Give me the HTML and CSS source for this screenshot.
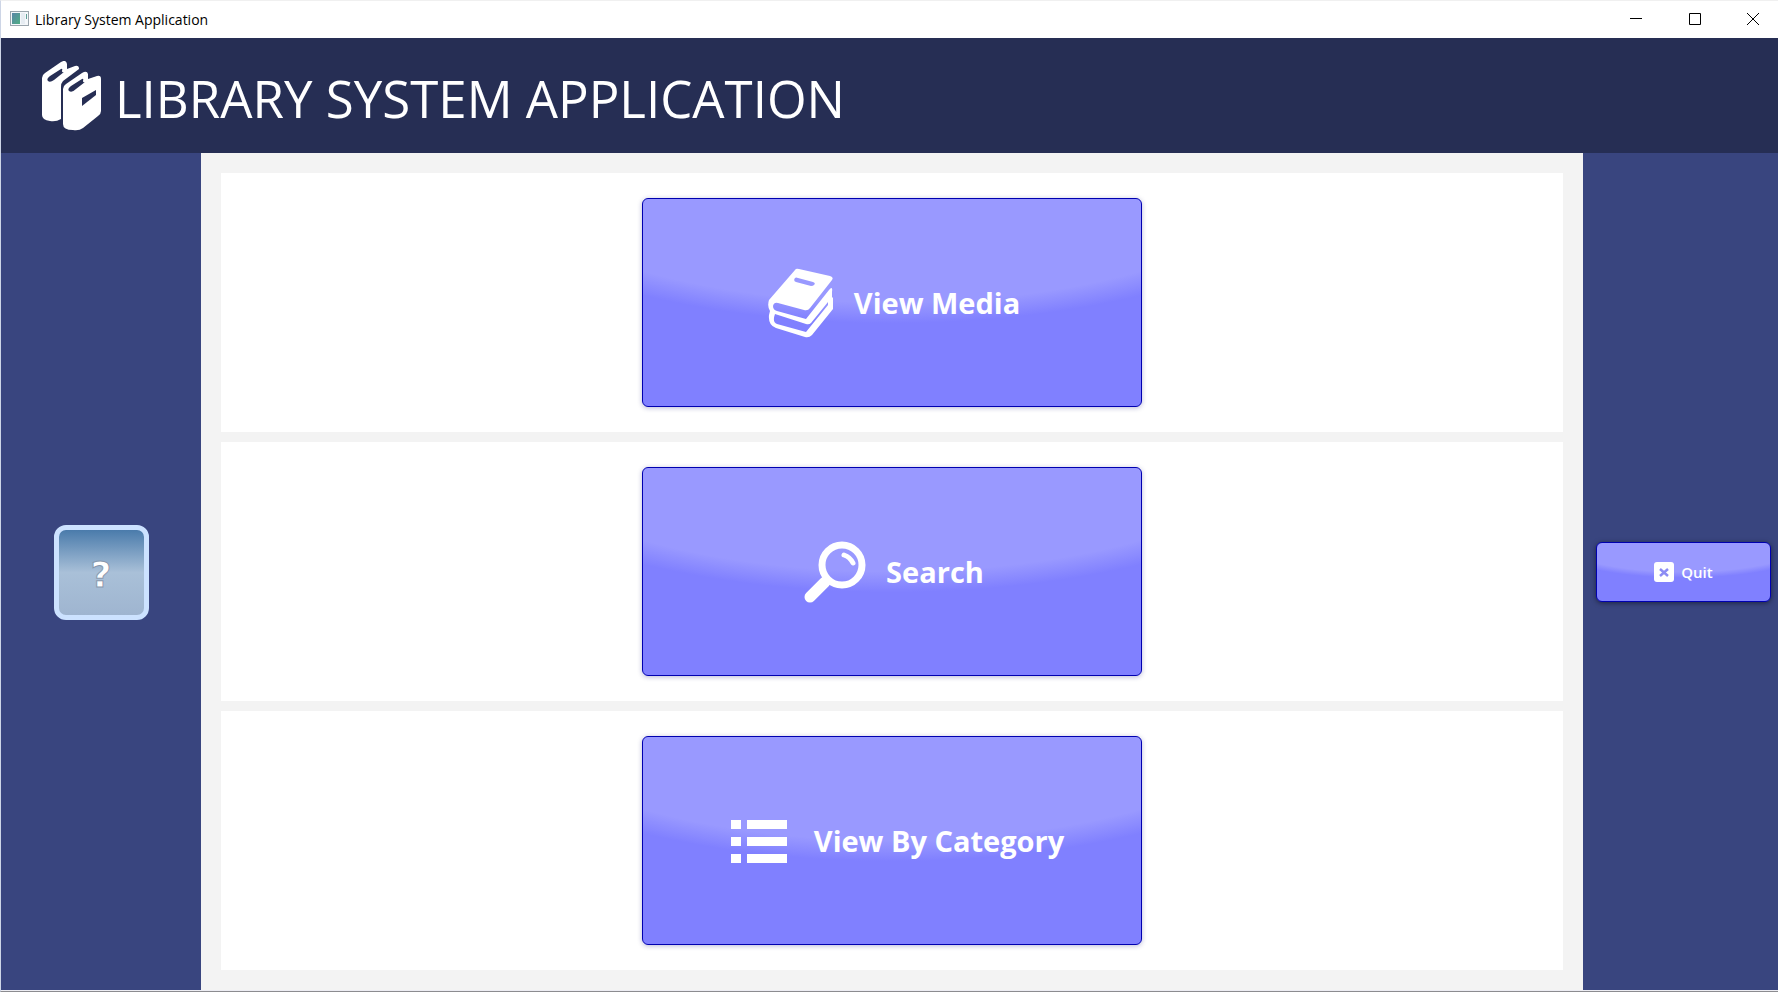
FILE: index.html
```html
<!DOCTYPE html>
<html lang="en">
<head>
<meta charset="utf-8">
<title>Library System Application</title>
<link rel="stylesheet" href="styles.css">
</head>
<body>
<div class="window">
  <div class="titlebar">
    <svg class="app-icon" viewBox="0 0 19 15" aria-hidden="true">
      <defs><linearGradient id="pane" x1="0" y1="0" x2="1" y2="1"><stop offset="0" stop-color="#5a86a8"/><stop offset="1" stop-color="#4fae84"/></linearGradient></defs>
      <rect x=".5" y=".5" width="18" height="14" fill="#f4f7fa" stroke="#9aa5ad"/>
      <rect x="2" y="2" width="8" height="11" fill="url(#pane)"/>
      <rect x="11" y="2" width="4" height="11" fill="#e6ecf2"/>
      <rect x="16" y="3" width="1" height="5" fill="#5f9f96"/>
    </svg>
    <span class="titlebar-text">Library System Application</span>
    <div class="window-controls">
      <button class="window-button" aria-label="Minimize"><svg viewBox="0 0 12 12"><path d="M0 5.5H12"/></svg></button>
      <button class="window-button" aria-label="Maximize"><svg viewBox="0 0 12 12"><path d="M.5.5H11.500V11.500H.5Z"/></svg></button>
      <button class="window-button" aria-label="Close"><svg viewBox="0 0 12 12"><path d="M0 0L12 12M12 0L0 12"/></svg></button>
    </div>
  </div>

  <header class="banner">
    <svg class="logo" viewBox="0 0 60 70" aria-hidden="true">
      <path fill="#fff" d="M0 17Q0 14 3 12L19 1Q24-2 25 3V8L33 5Q37 4 37 8L21 20Q19 22 19 26V58Q14 61 8 60Q0 59 0 54Z"/>
      <path fill="#262e54" d="M19 8Q21 7 20 10Q20 12 22 11L12 19Q8 22 6 20Q4 18 8 15Z"/>
      <path fill="#fff" d="M21 28Q21 25 24 23L40 12Q45 9 46 13V18L55 15Q59 14 59 18V50Q59 53 56 55L41 67Q37 70 31 69Q21 69 21 63Z"/>
      <path fill="#262e54" d="M40 18Q42 17 41 20Q41 22 43 21L34 28Q30 32 27 30Q25 28 29 25Z"/>
      <path fill="#262e54" d="M40 37L54 29V34L40 45Z"/>
    </svg>
    <h1 class="banner-title">LIBRARY SYSTEM APPLICATION</h1>
  </header>

  <div class="content">
    <aside class="side side-left">
      <button class="help-button" aria-label="Help">?</button>
    </aside>

    <main class="menu">
      <section class="panel">
        <button class="glossy menu-button">
          <svg class="icon-books" viewBox="0 0 66 70" aria-hidden="true">
            <path fill="#fff" fill-rule="evenodd" d="M27 2Q28 0 31 1L62 8Q66 9 64 12L42 40Q40 43 36 42L10 35Q6 34 5 38Q5 42 9 43L38 51L61 22Q65 17 64 24V29L65 30V41L44 67Q41 70 37 69L8 60Q0 57 1 47L2 43Q-1 38 1 32ZM27 10Q25 13 28 14L43 18Q45 18 46 17Q48 15 45 14L30 10Q28 9 27 10ZM7 46Q4 54 9 56L38 64L60 37V34L43 55Q41 57 38 56Z"/>
          </svg>
          <span>View Media</span>
        </button>
      </section>
      <section class="panel">
        <button class="glossy menu-button">
          <svg class="icon-search" viewBox="0 0 62 62" aria-hidden="true" fill="none" stroke="#fff" stroke-linecap="round">
            <circle cx="38" cy="24" r="20" stroke-width="7"/>
            <path stroke-width="11" d="M6 56L21 41"/>
            <path stroke-width="5" d="M40 14Q46 16 49 22"/>
          </svg>
          <span>Search</span>
        </button>
      </section>
      <section class="panel">
        <button class="glossy menu-button">
          <svg class="icon-list" viewBox="0 0 70 70" aria-hidden="true" fill="#fff">
            <path d="M7 14H17V23H7ZM23 14H63V23H23ZM7 31H17V40H7ZM23 31H63V40H23ZM7 48H17V57H7ZM23 48H63V57H23Z"/>
          </svg>
          <span>View By Category</span>
        </button>
      </section>
    </main>

    <aside class="side side-right">
      <button class="glossy quit-button">
        <svg class="icon-quit" viewBox="0 0 20 20" aria-hidden="true">
          <rect width="20" height="20" rx="3" fill="#fff"/>
          <path d="M6 7L14 14M14 7L6 14" stroke="#8c8cf4" stroke-width="2.500"/>
        </svg>
        <span>Quit</span>
      </button>
    </aside>
  </div>
</div>
</body>
</html>
```
FILE: styles.css
```css
* {
  box-sizing: border-box;
}

body {
  margin: 0;
  background: #fff;
  font-family: "Open Sans", "Noto Sans", sans-serif;
}

button {
  margin: 0;
  padding: 0;
  border: 0;
  font-family: inherit;
  cursor: pointer;
}

.window {
  display: flex;
  flex-direction: column;
  height: 100vh;
  border-top: 1px solid #f0f0f0;
  border-left: 1px solid #cdd5e6;
  border-bottom: 1px solid #8c8c90;
}

.titlebar {
  display: flex;
  align-items: center;
  flex: none;
  height: 37px;
  padding: 0 0 2px 9px;
  background: #fff;
}

.app-icon {
  width: 19px;
  height: 15px;
}

.titlebar-text {
  padding: 2px 0 0 6px;
  color: #000;
  font-size: 14px;
  line-height: 20px;
}

.window-controls {
  display: flex;
  align-self: stretch;
  margin-left: auto;
}

.window-button {
  display: grid;
  place-items: center;
  width: 59px;
  background: transparent;
}

.window-button:last-child {
  width: 54px;
  padding-left: 4px;
}

.window-button svg {
  width: 12px;
  height: 12px;
  fill: none;
  stroke: #000;
  stroke-width: 1;
}

.banner {
  display: flex;
  align-items: center;
  flex: none;
  height: 115px;
  padding-left: 41px;
  background: #262e54;
}

.logo {
  width: 60px;
  height: 70px;
}

.banner-title {
  margin: 0;
  padding: 4px 0 0 13px;
  color: #fff;
  font-size: 51px;
  font-weight: 400;
  line-height: 72px;
  white-space: nowrap;
}

.content {
  display: flex;
  flex: 1;
  min-height: 0;
  border-bottom: 1px solid #ececf2;
}

.side {
  display: flex;
  align-items: center;
  justify-content: center;
  flex: none;
  background: #39457f;
}

.side-left {
  width: 200px;
  padding-top: 2px;
}

.side-right {
  width: 195px;
  padding: 0 7px 0 13px;
}

.menu {
  display: flex;
  flex-direction: column;
  flex: 1;
  gap: 10px;
  padding: 20px;
  background: #f3f3f3;
}

.panel {
  display: flex;
  justify-content: center;
  flex: 1;
  padding: 25px;
  background: #fff;
}

.glossy {
  display: flex;
  align-items: center;
  justify-content: center;
  border: 1px solid #0000b0;
  border-radius: 6px;
  background: radial-gradient(200% 200% at 50% -40%, #9999ff 45%, #8080ff 50%);
  color: #fff;
}

.menu-button {
  gap: 20px;
  width: 500px;
  padding-left: 4px;
  box-shadow: 0 1px 5px rgba(20, 20, 120, 0.3);
  font-size: 29px;
  font-weight: 700;
  line-height: 40px;
}

.icon-books {
  width: 66px;
  height: 70px;
}

.icon-search {
  width: 62px;
  height: 62px;
}

.icon-list {
  width: 70px;
  height: 70px;
}

.quit-button {
  gap: 7px;
  width: 100%;
  height: 60px;
  box-shadow: 0 1px 5px rgba(0, 0, 0, 0.5);
  font-size: 15px;
  font-weight: 600;
  line-height: 20px;
}

.icon-quit {
  width: 20px;
  height: 20px;
}

.help-button {
  width: 95px;
  height: 95px;
  padding-top: 4px;
  border: 5px solid #cce2ff;
  border-radius: 12px;
  background: linear-gradient(#4a7bab 0%, #a9c0d8 50%, #9fb5d0 100%);
  color: #fff;
  font-family: "DejaVu Sans", sans-serif;
  font-size: 36px;
  font-weight: 700;
  -webkit-text-stroke: 1px #8797ad;
}
```
